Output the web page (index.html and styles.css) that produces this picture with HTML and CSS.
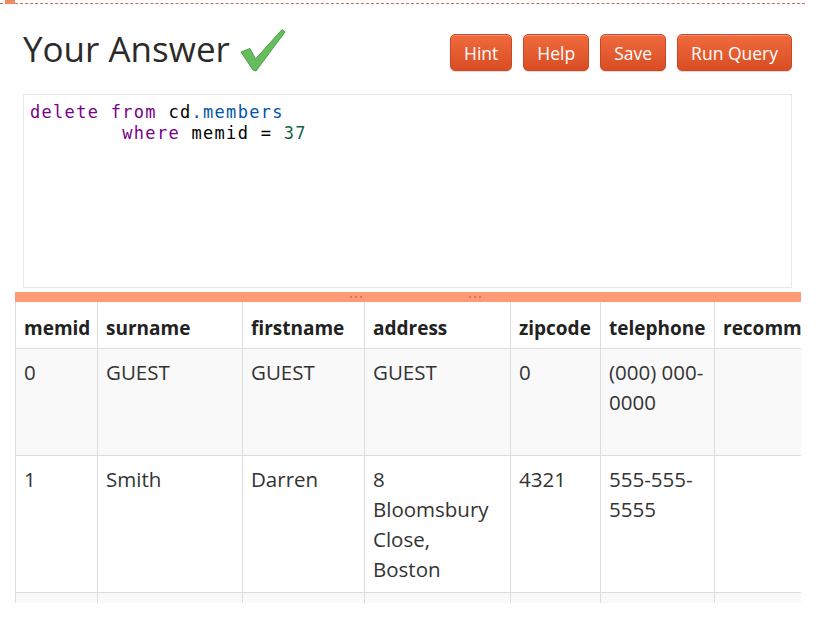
FILE: index.html
```html
<!DOCTYPE html>
<html>
<head>
<meta charset="utf-8">
<link rel="stylesheet" href="styles.css">
</head>
<body>
<div class="topline"><span class="tab"></span></div>
<div class="head">
  <h1 class="title">Your Answer
    <svg class="check" width="46" height="44" viewBox="0 0 46 44"><path d="M1 24 L10 20.5 L15.5 31 L42 1.5 L45 4 L16 43 L13 42 Z" fill="#65bd5e" stroke="#4f9e49" stroke-width="1" stroke-linejoin="round"/></svg>
  </h1>
  <div class="buttons">
    <button class="btn">Hint</button>
    <button class="btn">Help</button>
    <button class="btn">Save</button>
    <button class="btn">Run Query</button>
  </div>
</div>
<div class="editor"><pre class="code"><span class="kw">delete</span> <span class="kw">from</span> cd<span class="var">.members</span>
        <span class="kw">where</span> memid = <span class="num">37</span></pre></div>
<div class="splitter"><span class="grip"><i></i><i></i><i></i></span><span class="grip"><i></i><i></i><i></i></span></div>
<div class="results">
<table class="grid">
  <colgroup>
    <col class="c1"><col class="c2"><col class="c3"><col class="c4"><col class="c5"><col class="c6"><col class="c7"><col class="c8">
  </colgroup>
  <thead>
    <tr><th>memid</th><th>surname</th><th>firstname</th><th>address</th><th>zipcode</th><th>telephone</th><th>recommendedby</th><th>joindate</th></tr>
  </thead>
  <tbody>
    <tr class="odd three"><td>0</td><td>GUEST</td><td>GUEST</td><td class="addr">GUEST</td><td>0</td><td>(000) 000-0000</td><td></td><td>2012-07-01 00:00:00</td></tr>
    <tr><td>1</td><td>Smith</td><td>Darren</td><td class="addr">8 Bloomsbury Close, Boston</td><td>4321</td><td>555-555-5555</td><td></td><td>2012-07-02 12:02:05</td></tr>
    <tr class="odd"><td>2</td><td>Smith</td><td>Tracy</td><td class="addr">8 Bloomsbury Close, New York</td><td>4321</td><td>555-555-5555</td><td></td><td>2012-07-02 12:08:23</td></tr>
  </tbody>
</table>
</div>
</body>
</html>
```

FILE: styles.css
```css
html, body {
  margin: 0;
  padding: 0;
  background: #fff;
}
body {
  font-family: "Open Sans", "DejaVu Sans", sans-serif;
  color: #333;
  width: 835px;
  height: 618px;
  overflow: hidden;
}
.topline {
  height: 3px;
  width: 805px;
  border-bottom: 1px dashed #c8714c;
  position: relative;
}
.tab {
  position: absolute;
  left: 5px;
  top: 0;
  width: 10px;
  height: 4px;
  background: #f08a60;
}
.head {
  display: flex;
  align-items: flex-start;
  justify-content: space-between;
  padding: 0 43px 0 23px;
  height: 90px;
}
.title {
  margin: 0;
  padding-top: 23px;
  font-weight: 400;
  font-size: 35px;
  line-height: 44px;
  color: #2b2b2b;
  display: flex;
  align-items: flex-end;
}
.check {
  margin-left: 10px;
  margin-bottom: -1px;
}
.buttons {
  display: flex;
  gap: 11px;
  padding-top: 30px;
}
.btn {
  height: 37px;
  padding: 0 13px;
  border: 1px solid #c9482a;
  border-radius: 5px;
  background: linear-gradient(#ef6b3d, #d94d24);
  color: #fff;
  font-family: "Open Sans", sans-serif;
  font-size: 17.5px;
  box-shadow: inset 0 1px 0 rgba(255,255,255,0.25), 0 1px 1px rgba(0,0,0,0.15);
}
.editor {
  margin: 0 43px 0 23px;
  height: 192px;
  border: 1px solid #e8e8e8;
}
.code {
  margin: 0;
  padding: 7px 6px;
  font-family: "DejaVu Sans Mono", monospace;
  font-size: 17px;
  letter-spacing: 1.3px;
  line-height: 21px;
  color: #000;
}
.kw { color: #770088; }
.var { color: #0055aa; }
.num { color: #116644; }
.splitter {
  margin: 4px 34px 0 15px;
  height: 10px;
  background: #ff9b74;
  display: flex;
  align-items: center;
}
.grip {
  display: flex;
  gap: 3px;
}
.grip i {
  width: 2px;
  height: 2px;
  border-radius: 1px;
  background: #c47058;
}
.grip:first-child { margin-left: 335px; }
.grip + .grip { margin-left: 107px; }
.results {
  margin-left: 15px;
  width: 786px;
  height: 301px;
  overflow: hidden;
}
.grid {
  border-collapse: collapse;
  table-layout: fixed;
  width: 1050px;
  font-size: 20.5px;
  line-height: 30px;
  color: #333;
}
.c1 { width: 82px; }
.c2 { width: 145px; }
.c3 { width: 122px; }
.c4 { width: 146px; }
.c5 { width: 90px; }
.c6 { width: 114px; }
.c7 { width: 160px; }
.c8 { width: 191px; }
.grid th, .grid td {
  border: 1px solid #dddddd;
  padding: 8px 6px 8px 8px;
  text-align: left;
  vertical-align: top;
}
.grid td.addr { padding-right: 12px; }
.grid th {
  border-top: none;
  padding-top: 11px;
  padding-bottom: 5px;
  font-size: 19px;
  font-weight: 700;
  color: #222;
}
.grid tr.odd td { background: #f9f9f9; }
.grid tr.three td { height: 90px; }
```
